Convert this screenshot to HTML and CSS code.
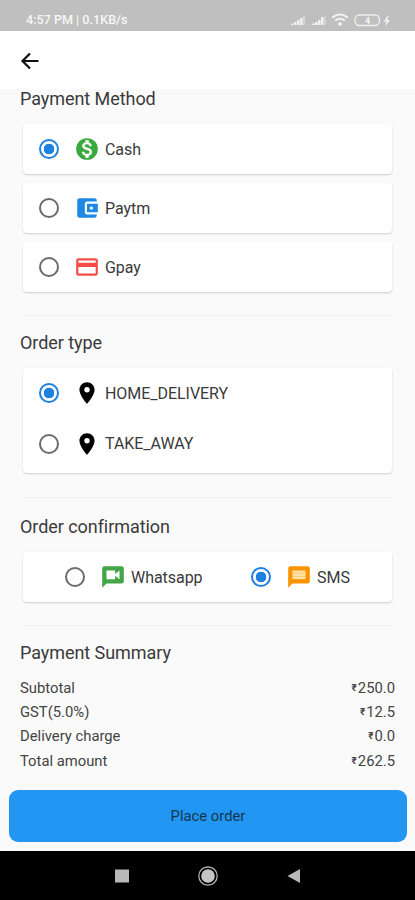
FILE: index.html
```html
<!DOCTYPE html>
<html lang="en">
<head>
<meta charset="utf-8">
<title>Payment</title>
<link rel="stylesheet" href="styles.css">
</head>
<body>
<header class="status">
  <span class="clock">4:57 PM | 0.1KB/s</span>
  <svg class="indicators" viewBox="0 0 108 16" width="108" height="16">
    <g fill="#f0f0f0">
      <path d="M1 12.500h2.500V14H1zM4 11h2.500v3H4zM7 9h2.500v5H7zM10 7h2.500v7H10z"/>
      <path d="M12.500 5.500H15V14h-2.500z" opacity=".5"/>
      <path d="M22 12.500h2.500V14H22zM25 11h2.500v3H25zM28 9h2.500v5H28zM31 6h2.500v8H31z"/>
      <path d="M33.500 5.500H36V14h-2.500z" opacity=".35"/>
      <path d="M50 10.500l2.400 2.400L50 15.300l-2.400-2.400z"/>
      <path d="M98 4.500l-4.500 6h2.800l-1 5 4.700-6.500h-2.800l1.800-4.500z"/>
    </g>
    <g fill="none" stroke="#f0f0f0" stroke-width="2">
      <path d="M42.300 6.800a10.800 10.800 0 0 1 15.400 0M45.200 9.700a6.800 6.800 0 0 1 9.600 0"/>
      <rect x="65" y="4" width="24.500" height="10.500" rx="4.500" stroke-width="1.300"/>
    </g>
    <text x="75" y="12.500" class="battery">4</text>
  </svg>
</header>
<div class="appbar">
  <svg viewBox="0 0 24 24" width="24" height="24"><path d="M20.500 12H4.500M12 4.500L4.500 12l7.500 7.500" fill="none" stroke="#111" stroke-width="2.200"/></svg>
</div>
<main>
  <section class="methods">
    <h2>Payment Method</h2>
    <div class="card option">
      <i class="radio on"></i>
      <svg class="icon" viewBox="0 0 24 24"><circle cx="12" cy="12" r="10" fill="#39a93d"/><path fill="#fff" stroke="#fff" stroke-width=".4" d="M13.400 18.100V20h-2.700v-1.900c-1.700-.4-3.200-1.500-3.300-3.400h2c.1 1 .8 1.900 2.700 1.900 2 0 2.400-1 2.400-1.600 0-.9-.4-1.700-2.700-2.200-2.400-.6-4.200-1.700-4.200-3.700 0-1.700 1.400-2.800 3.100-3.200V4h2.700v2c1.800.4 2.800 1.800 2.800 3.300h-2c0-1.100-.6-1.900-2.200-1.900-1.500 0-2.300.7-2.300 1.600 0 .8.700 1.400 2.600 1.900s4.200 1.300 4.200 4c0 1.800-1.500 2.900-3.100 3.200z"/></svg>
      <span>Cash</span>
    </div>
    <div class="card option">
      <i class="radio"></i>
      <svg class="icon" viewBox="0 0 24 24" fill="#1e88e5"><path d="M21 18v1c0 1.100-.9 2-2 2H5c-1.100 0-2-.9-2-2V5c0-1.100.9-2 2-2h14c1.100 0 2 .9 2 2v1h-9c-1.100 0-2 .9-2 2v8c0 1.100.9 2 2 2h9zm-9-2h10V8H12v8zm4-2.500c-.83 0-1.500-.67-1.500-1.500s.67-1.500 1.500-1.500 1.500.67 1.500 1.500-.67 1.500-1.500 1.500z"/></svg>
      <span>Paytm</span>
    </div>
    <div class="card option">
      <i class="radio"></i>
      <svg class="icon" viewBox="0 0 24 24" fill="#f44d49"><path d="M20 4H4c-1.110 0-1.990.89-1.990 2L2 18c0 1.110.89 2 2 2h16c1.110 0 2-.89 2-2V6c0-1.110-.89-2-2-2zm0 14H4v-6h16v6zm0-10H4V6h16v2z"/></svg>
      <span>Gpay</span>
    </div>
  </section>
  <section class="types">
    <h2>Order type</h2>
    <div class="card group">
      <div class="option">
        <i class="radio on"></i>
        <svg class="icon" viewBox="0 0 24 24"><path d="M12 2C8.130 2 5 5.130 5 9c0 5.250 7 13 7 13s7-7.750 7-13c0-3.870-3.130-7-7-7zm0 9.500a2.500 2.500 0 0 1 0-5 2.500 2.500 0 0 1 0 5z"/></svg>
        <span>HOME_DELIVERY</span>
      </div>
      <div class="option">
        <i class="radio"></i>
        <svg class="icon" viewBox="0 0 24 24"><path d="M12 2C8.130 2 5 5.130 5 9c0 5.250 7 13 7 13s7-7.750 7-13c0-3.870-3.130-7-7-7zm0 9.500a2.500 2.500 0 0 1 0-5 2.500 2.500 0 0 1 0 5z"/></svg>
        <span>TAKE_AWAY</span>
      </div>
    </div>
  </section>
  <section class="confirm">
    <h2>Order confirmation</h2>
    <div class="card pair">
      <div class="option">
        <i class="radio"></i>
        <svg class="icon" viewBox="0 0 24 24" fill="#43a547"><path d="M20 2H4c-1.100 0-1.990.9-1.990 2L2 22l4-4h14c1.100 0 2-.9 2-2V4c0-1.100-.9-2-2-2zm-2 12l-4-3.200V14H6V6h8v3.200L18 6v8z"/></svg>
        <span>Whatsapp</span>
      </div>
      <div class="option">
        <i class="radio on"></i>
        <svg class="icon" viewBox="0 0 24 24"><path fill="#fb9400" d="M20 2H4c-1.100 0-1.990.9-1.990 2L2 22l4-4h14c1.100 0 2-.9 2-2V4c0-1.100-.9-2-2-2z"/><path fill="#ffe2aa" d="M6 6h12v8H6z"/><path fill="#ffcc75" d="M6 8h12v1H6zM6 11h12v1H6z"/></svg>
        <span>SMS</span>
      </div>
    </div>
  </section>
  <section class="summary">
    <h2>Payment Summary</h2>
    <dl>
      <dt>Subtotal</dt><dd><small>₹</small>250.0</dd>
      <dt>GST(5.0%)</dt><dd><small>₹</small>12.5</dd>
      <dt>Delivery charge</dt><dd><small>₹</small>0.0</dd>
      <dt>Total amount</dt><dd><small>₹</small>262.5</dd>
    </dl>
  </section>
</main>
<button class="place">Place order</button>
<nav class="navbar">
  <svg viewBox="0 0 14 14" width="14" height="14"><path fill="#b9b9b9" d="M0 .5h14v13H0z"/></svg>
  <svg viewBox="0 0 20 20" width="20" height="20"><circle cx="10" cy="10" r="9.200" fill="none" stroke="#b9b9b9" stroke-width="1.200"/><circle cx="10" cy="10" r="6.800" fill="#c4c4c4"/></svg>
  <svg viewBox="0 0 14 14" width="14" height="14"><path fill="#b9b9b9" d="M13 0v14L.5 7z"/></svg>
</nav>
</body>
</html>
```
FILE: styles.css
```css
* { box-sizing: border-box; }
body {
  margin: 0;
  width: 415px;
  height: 900px;
  display: flex;
  flex-direction: column;
  overflow: hidden;
  background: #fafafa;
  color: #3a3a3a;
  font: 16px/24px Roboto, sans-serif;
}
.status {
  height: 31px;
  flex: none;
  display: flex;
  justify-content: space-between;
  padding: 10px 17px 0 26px;
  background: #bfbfbf;
}
.clock { font-size: 12.6px; line-height: 20px; font-weight: 500; color: #f6f6f6; white-space: nowrap; }
.indicators { margin-top: 1px; }
.battery { font: 700 9px Roboto, sans-serif; fill: #f4f4f4; }
.appbar {
  height: 58px;
  flex: none;
  padding: 18px;
  background: #fff;
}
.appbar svg { display: block; }
main { flex: none; height: 701px; padding: 0 20px; }
section { border-bottom: 1px solid #f1f1f1; }
h2 {
  margin: 0 0 13px;
  font-size: 18px;
  line-height: 24px;
  font-weight: 400;
  letter-spacing: -.06px;
  color: #3a3a3a;
  white-space: nowrap;
}
.card {
  margin: 0 3px;
  background: #fff;
  border-radius: 4px;
  box-shadow: 0 1px 2px rgba(0, 0, 0, .18);
}
.option { display: flex; align-items: center; height: 50px; padding-left: 16px; white-space: nowrap; }
.option span { padding-top: 1px; letter-spacing: -.04px; }
.radio {
  width: 20px;
  height: 20px;
  flex: none;
  border: 2px solid #6b6b6b;
  border-radius: 50%;
}
.radio.on {
  border-color: #1e80e0;
  background: radial-gradient(circle, #1e80e0 5px, transparent 5.600px);
}
.icon { width: 26px; height: 26px; flex: none; margin: 0 5px 0 15px; }
.methods { height: 229px; margin-top: -2px; }
.methods .card + .card { margin-top: 9px; }
.types { height: 182px; padding-top: 15px; }
.group { height: 105px; }
.group .option + .option { height: 51px; }
.confirm { height: 128px; padding-top: 17px; }
.pair { display: flex; height: 50px; padding-left: 26px; }
.pair .option:first-child { width: 186px; }
.summary { padding-top: 15px; border: 0; }
dl { display: grid; grid-template-columns: 1fr auto; grid-auto-rows: 24.200px; margin: 0; font-size: 14.800px; color: #444; }
.summary h2 { margin-bottom: 11px; }
dd { margin: 0; text-align: right; }
dd small { font-size: 10px; vertical-align: 2px; font-weight: 700; margin-right: 1px; }
.place {
  flex: none;
  height: 52px;
  margin: 0 8px 0 9px;
  border: 0;
  border-radius: 9px;
  background: #2196f3;
  color: #17374f;
  font: 14.800px Roboto, sans-serif;
}
.navbar {
  margin-top: 9px;
  flex: 1;
  display: grid;
  grid-template-columns: 86px 86px 86px;
  justify-content: center;
  justify-items: center;
  align-items: center;
  background: #000;
}
```
